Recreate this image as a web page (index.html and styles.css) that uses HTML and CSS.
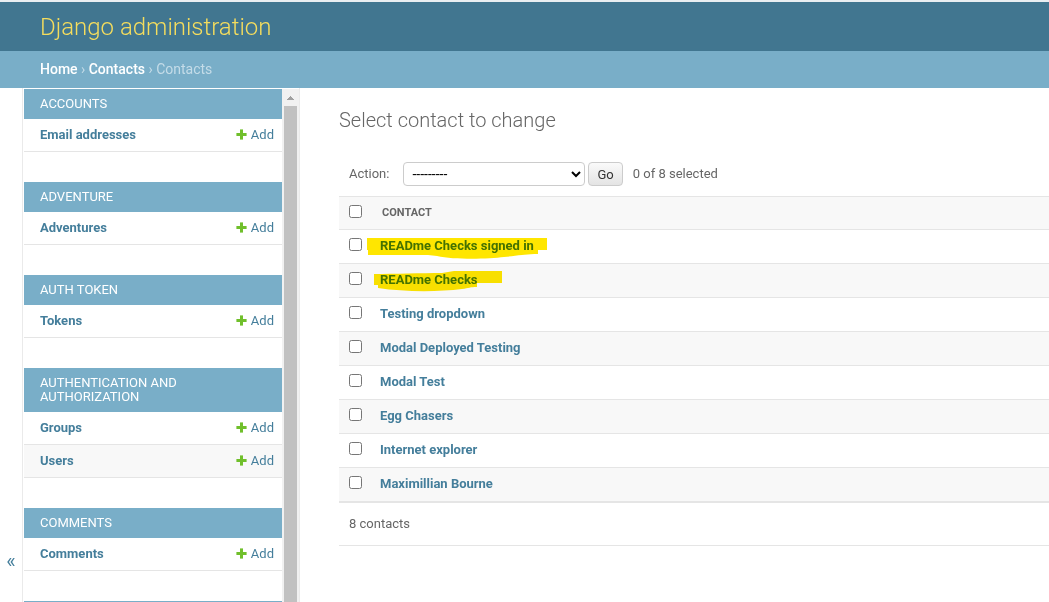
FILE: index.html
```html
<!DOCTYPE html>
<html lang="en">
<head>
<meta charset="utf-8">
<meta name="viewport" content="width=device-width, initial-scale=1">
<title>Select contact to change | Django administration</title>
<link rel="stylesheet" href="styles.css">
</head>
<body>
<svg class="defs" aria-hidden="true"><symbol id="plus" viewBox="0 0 11 11"><path fill-opacity=".6" d="M4 0h3v11H4zM0 4h11v3H0z"/><path d="M4 1h3v3h3v3H7v3H4V7H1V4h3z"/></symbol></svg>
<header class="header"><h1 class="site-name"><a href="#">Django administration</a></h1></header>
<nav class="breadcrumbs" aria-label="Breadcrumbs"><a href="#">Home</a> › <a href="#">Contacts</a> › Contacts</nav>
<div class="main">
  <button class="toggle" type="button" aria-label="Toggle navigation">«</button>
  <nav class="sidebar" aria-label="Applications">
    <div class="apps">
      <section class="app"><h2><a href="#">Accounts</a></h2>
        <div class="model"><a class="name" href="#">Email addresses</a><a class="add" href="#"><svg><use href="#plus"/></svg>Add</a></div></section>
      <section class="app"><h2><a href="#">Adventure</a></h2>
        <div class="model"><a class="name" href="#">Adventures</a><a class="add" href="#"><svg><use href="#plus"/></svg>Add</a></div></section>
      <section class="app"><h2><a href="#">Auth Token</a></h2>
        <div class="model"><a class="name" href="#">Tokens</a><a class="add" href="#"><svg><use href="#plus"/></svg>Add</a></div></section>
      <section class="app"><h2><a href="#">Authentication and Authorization</a></h2>
        <div class="model"><a class="name" href="#">Groups</a><a class="add" href="#"><svg><use href="#plus"/></svg>Add</a></div>
        <div class="model"><a class="name" href="#">Users</a><a class="add" href="#"><svg><use href="#plus"/></svg>Add</a></div></section>
      <section class="app"><h2><a href="#">Comments</a></h2>
        <div class="model"><a class="name" href="#">Comments</a><a class="add" href="#"><svg><use href="#plus"/></svg>Add</a></div></section>
      <div class="app-edge"></div>
    </div>
    <div class="scrollbar" aria-hidden="true"><svg class="arrow" viewBox="0 0 7 4"><path d="M3 0h1v1h1v1h1v1h1v1H0V3h1V2h1V1h1z"/></svg><div class="thumb"></div></div>
  </nav>
  <main class="content">
    <h2 class="title">Select contact to change</h2>
    <form>
      <div class="actions">
        <label for="action">Action:</label>
        <select id="action"><option>---------</option></select>
        <button class="go" type="button">Go</button>
        <span class="count">0 of 8 selected</span>
      </div>
      <table class="results">
        <thead><tr><th class="check"><input type="checkbox" aria-label="Select all"></th><th class="column" scope="col">Contact</th></tr></thead>
        <tbody>
          <tr><td class="check"><input type="checkbox" aria-label="Select READme Checks signed in"></td><th scope="row"><a class="marked" href="#">READme Checks signed in<svg class="marker" viewBox="0 0 180 20"><path d="M0 0h180v12h-9v4c-14 0-22 2-34 3-15 2-49 3-67-1l-9-1H1v-5H0z"/></svg></a></th></tr>
          <tr><td class="check"><input type="checkbox" aria-label="Select READme Checks"></td><th scope="row"><a class="marked" href="#">READme Checks<svg class="marker" viewBox="0 0 180 20"><path d="M7 2c20 0 48-1 68-1l12-2h48v12h-25v4c-7 0-8 1-15 2-24 3-58 3-84-1v-3H7z"/></svg></a></th></tr>
          <tr><td class="check"><input type="checkbox" aria-label="Select Testing dropdown"></td><th scope="row"><a href="#">Testing dropdown</a></th></tr>
          <tr><td class="check"><input type="checkbox" aria-label="Select Modal Deployed Testing"></td><th scope="row"><a href="#">Modal Deployed Testing</a></th></tr>
          <tr><td class="check"><input type="checkbox" aria-label="Select Modal Test"></td><th scope="row"><a href="#">Modal Test</a></th></tr>
          <tr><td class="check"><input type="checkbox" aria-label="Select Egg Chasers"></td><th scope="row"><a href="#">Egg Chasers</a></th></tr>
          <tr><td class="check"><input type="checkbox" aria-label="Select Internet explorer"></td><th scope="row"><a href="#">Internet explorer</a></th></tr>
          <tr><td class="check"><input type="checkbox" aria-label="Select Maximillian Bourne"></td><th scope="row"><a href="#">Maximillian Bourne</a></th></tr>
        </tbody>
      </table>
      <p class="paginator">8 contacts</p>
    </form>
  </main>
</div>
</body>
</html>
```

FILE: styles.css
```css
* { box-sizing: border-box; }
body {
  margin: 0;
  height: 100vh;
  display: flex;
  flex-direction: column;
  overflow: hidden;
  border-top: 2px solid #e9eef1;
  background: #fff;
  color: #666;
  font: 13px/16px Roboto, "Liberation Sans", sans-serif;
}
a { color: #447e9b; text-decoration: none; }
h1, h2, p { margin: 0; font-weight: 400; }
.defs { position: absolute; width: 0; height: 0; }
.header { padding: 11px 40px 9px; background: #417690; }
.site-name { font-size: 24px; line-height: 29px; font-weight: 300; }
.site-name a { color: #f5dd5d; }
.breadcrumbs {
  padding: 10px 40px;
  background: #79aec8;
  color: #c4dce8;
  font-size: 14px;
  line-height: 17px;
}
.breadcrumbs a { color: #fff; font-weight: 500; }

.main { flex: 1; display: flex; min-height: 0; }
.toggle {
  width: 23px;
  padding: 432px 0 0;
  border: 0;
  border-right: 1px solid #eaeaea;
  background: #fff;
  color: #447e9b;
  font: 20px/20px Roboto, sans-serif;
}
.sidebar {
  flex: 0 0 277px;
  display: flex;
  overflow: hidden;
  padding: 1px 0 0 1px;
  border-right: 1px solid #eaeaea;
}
.apps { flex: 1; }
.app { margin-bottom: 30px; }
.app h2 {
  padding: 8px 16px;
  background: #79aec8;
  font-size: 13px;
  line-height: 14px;
  font-weight: 400;
  text-transform: uppercase;
}
.app h2 a { color: #fff; }
.model {
  display: flex;
  justify-content: space-between;
  padding: 8px 8px 8px 16px;
  border-bottom: 1px solid #e5e5e5;
}
.model:nth-child(odd) { background: #f8f8f8; }
.name { font-weight: 700; }
.add { display: flex; gap: 4px; }
.add svg { width: 11px; height: 11px; margin-top: 2px; fill: #70bf2b; }
.app-edge { height: 30px; background: #79aec8; }
.scrollbar {
  width: 17px;
  display: flex;
  flex-direction: column;
  align-items: center;
  gap: 6px;
  padding-top: 7px;
  background: #f1f1f1;
}
.arrow { flex: none; width: 7px; height: 4px; fill: #a0a0a0; }
.thumb { flex: 1; width: 13px; background: #c1c1c1; }

.content { flex: 1; padding: 20px 0 0 39px; }
.title { font-size: 20px; line-height: 24px; font-weight: 300; }
.actions {
  display: flex;
  align-items: center;
  padding: 30px 10px 10px;
}
.actions select {
  width: 182px;
  height: 24px;
  margin: 0 3px 0 14px;
  padding: 0 4px;
  border: 1px solid #ccc;
  border-radius: 4px;
  background: #fff;
  color: #000;
  font: 14px Roboto, sans-serif;
}
.go {
  height: 24px;
  margin-right: 10px;
  padding: 0 8px;
  border: 1px solid #ccc;
  border-radius: 4px;
  background: linear-gradient(#fafafa, #e4e4e4);
  color: #333;
  font: 13px Roboto, sans-serif;
}
.results { width: 100%; border-collapse: separate; border-spacing: 0; border-top: 1px solid #e5e5e5; }
.results td, .results th {
  padding: 8px 8px 9px;
  border-bottom: 1px solid #e5e5e5;
  text-align: left;
  vertical-align: top;
  line-height: 16px;
}
.results .check { width: 33px; padding-left: 10px; padding-right: 0; }
.results input { display: block; width: 13px; height: 13px; margin: 0; }
.results thead th { padding-bottom: 8px; background: #f8f8f8; }
.results .column { padding-left: 10px; font-size: 11px; text-transform: uppercase; }
.results tbody tr:nth-child(even) > * { background: #f8f8f8; }
.results tbody tr:last-child > * { border-bottom-width: 2px; }
.marked { position: relative; display: inline-block; vertical-align: top; }
.marker {
  position: absolute;
  left: -13px;
  top: 0;
  width: 180px;
  height: 20px;
  overflow: visible;
  fill: #ffe600;
  mix-blend-mode: multiply;
  pointer-events: none;
}
.paginator { padding: 13px 10px; border-bottom: 1px solid #e5e5e5; }
```
